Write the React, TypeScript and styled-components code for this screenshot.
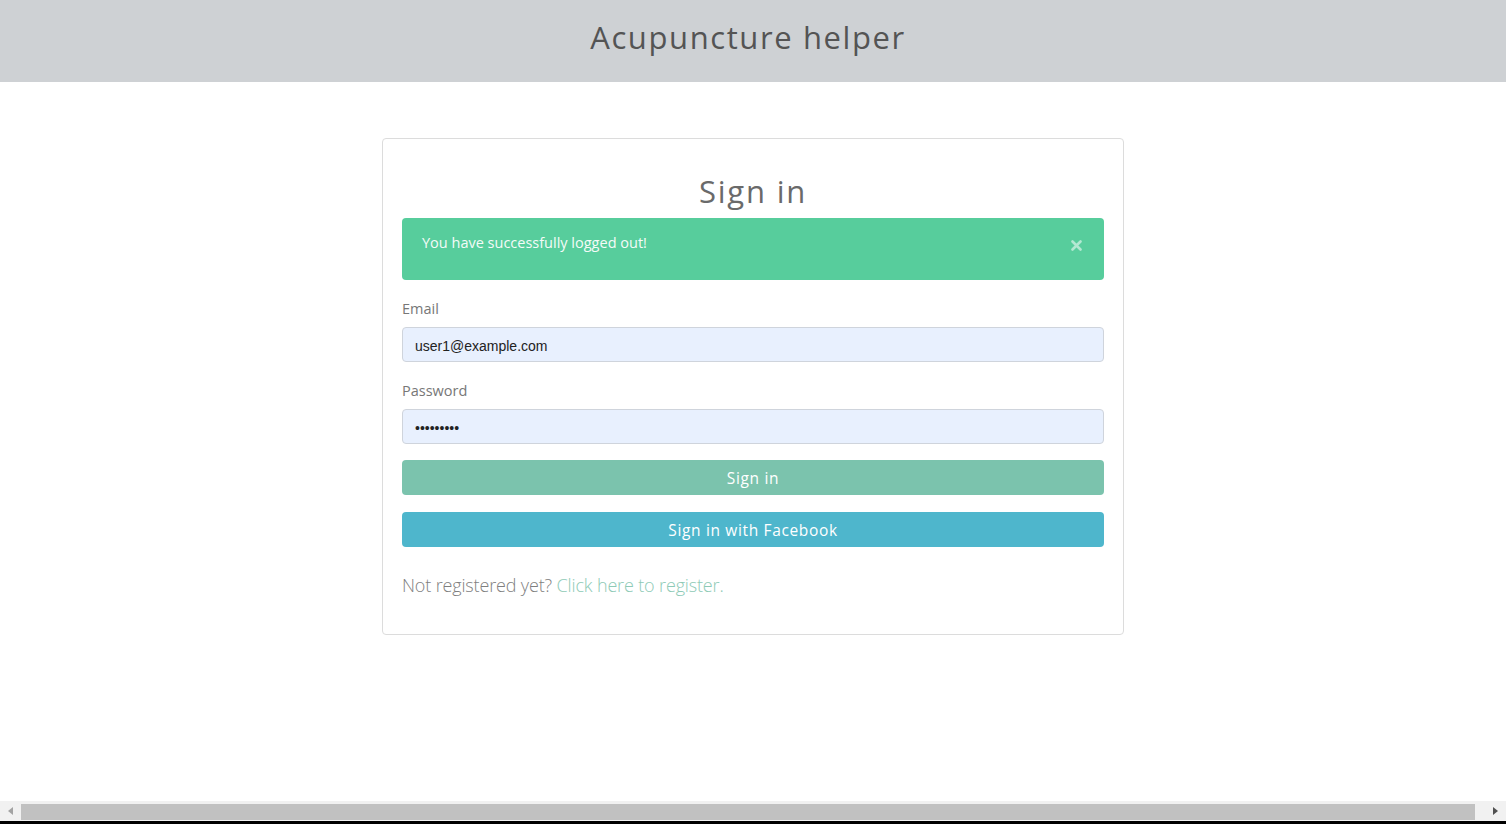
import React from "react";
import styled, { createGlobalStyle } from "styled-components";

const HEADER_HEIGHT = 82;
const DISPLAY_FONT = `"Open Sans", "DejaVu Sans", sans-serif`;
const BODY_FONT = `"Open Sans", "Noto Sans", sans-serif`;

const GlobalStyles = createGlobalStyle`
  html, body {
    margin: 0;
    padding: 0;
    height: 100%;
    background: #ffffff;
    font-family: ${BODY_FONT};
  }
  #root {
    height: 100%;
  }
  * {
    box-sizing: border-box;
  }
`;

const Page = styled.div`
  display: flex;
  flex-direction: column;
  height: 100vh;
  overflow: hidden;
`;

const Header = styled.header`
  height: ${HEADER_HEIGHT}px;
  flex-shrink: 0;
  background: #ced1d4;
  display: flex;
  align-items: center;
  justify-content: center;
  padding-right: 10px;
`;

const HeaderTitle = styled.h1`
  margin: 0 0 9px;
  font-family: ${DISPLAY_FONT};
  font-weight: 500;
  font-size: 31px;
  letter-spacing: 1.6px;
  color: #545454;
`;

const Main = styled.main`
  flex: 1;
  display: flex;
  justify-content: center;
  align-items: flex-start;
  padding-top: 56px;
`;

const Card = styled.section`
  width: 742px;
  border: 1px solid #dcdcdc;
  border-radius: 4px;
  padding: 20px 19px 37px;
  display: flex;
  flex-direction: column;
`;

const CardTitle = styled.h2`
  margin: 12px 0 7px;
  line-height: 40px;
  text-align: center;
  font-family: ${DISPLAY_FONT};
  font-weight: 400;
  font-size: 31px;
  letter-spacing: 1.8px;
  color: #6a6a6a;
`;

const Alert = styled.div`
  height: 62px;
  background: #57cd9c;
  border-radius: 4px;
  padding: 15px 20px;
  display: flex;
  justify-content: space-between;
  align-items: flex-start;
  color: #f4fbf8;
  font-size: 14.5px;
  line-height: 20px;
`;

const CloseButton = styled.span`
  margin: 7px 2px 0 0;
  display: flex;
  color: rgba(255, 255, 255, 0.55);
`;

const Label = styled.label`
  display: block;
  margin: 19px 0 8px;
  font-size: 14.5px;
  line-height: 20px;
  color: #777777;
`;

const Input = styled.input`
  width: 100%;
  height: 35px;
  padding: 2px 12px 0;
  background: #e8f0fe;
  border: 1px solid #cfd4dc;
  border-radius: 4px;
  font-family: "Liberation Sans", Arial, sans-serif;
  font-size: 14px;
  color: #222222;
  outline: none;
`;

const Button = styled.button<{ $color: string; $gap: number }>`
  margin-top: ${(p) => p.$gap}px;
  width: 100%;
  height: 35px;
  border: none;
  border-radius: 4px;
  background: ${(p) => p.$color};
  color: #ffffff;
  font-family: ${DISPLAY_FONT};
  font-size: 15.5px;
  letter-spacing: 0.65px;
  cursor: pointer;
`;

const Footer = styled.p`
  margin: 26px 0 0;
  font-size: 18px;
  line-height: 24px;
  font-weight: 300;
  letter-spacing: -0.15px;
  color: #7f7f7f;
`;

const RegisterLink = styled.a`
  color: #8ecab6;
  text-decoration: none;
`;

const Scrollbar = styled.div`
  height: 20px;
  flex-shrink: 0;
  background: #f1f1f1;
  display: flex;
  align-items: center;
`;

const ScrollArrow = styled.div<{ $side: "left" | "right" }>`
  width: ${(p) => (p.$side === "left" ? 21 : 31)}px;
  display: flex;
  justify-content: ${(p) => (p.$side === "left" ? "center" : "flex-end")};
  padding-right: ${(p) => (p.$side === "left" ? 0 : 7)}px;
`;

const ScrollThumb = styled.div`
  flex: 1;
  height: 16px;
  margin-top: 2px;
  background: #c1c1c1;
`;

const BottomEdge = styled.div`
  height: 3px;
  flex-shrink: 0;
  background: #000000;
`;

function Arrow({ dir, color }: { dir: "left" | "right"; color: string }) {
  const pts = dir === "left" ? "6,1 6,9 1,5" : "1,1 1,9 6,5";
  return (
    <svg width="7" height="10" viewBox="0 0 7 10">
      <polygon points={pts} fill={color} />
    </svg>
  );
}

export default function App() {
  return (
    <Page>
      <GlobalStyles />
      <Header>
        <HeaderTitle>Acupuncture helper</HeaderTitle>
      </Header>
      <Main>
        <Card>
          <CardTitle>Sign in</CardTitle>
          <Alert>
            <span>You have successfully logged out!</span>
            <CloseButton>
              <svg width="11" height="11" viewBox="0 0 11 11">
                <path
                  d="M1.5 1.5 L9.5 9.5 M9.5 1.5 L1.5 9.5"
                  stroke="currentColor"
                  strokeWidth="2.6"
                  strokeLinecap="round"
                />
              </svg>
            </CloseButton>
          </Alert>
          <Label htmlFor="email">Email</Label>
          <Input id="email" type="email" defaultValue="user1@example.com" />
          <Label htmlFor="password">Password</Label>
          <Input id="password" type="password" defaultValue="secret123" />
          <Button $color="#7bc3ad" $gap={16}>
            Sign in
          </Button>
          <Button $color="#4eb6cc" $gap={17}>
            Sign in with Facebook
          </Button>
          <Footer>
            Not registered yet?{" "}
            <RegisterLink href="#">Click here to register.</RegisterLink>
          </Footer>
        </Card>
      </Main>
      <Scrollbar>
        <ScrollArrow $side="left">
          <Arrow dir="left" color="#a3a3a3" />
        </ScrollArrow>
        <ScrollThumb />
        <ScrollArrow $side="right">
          <Arrow dir="right" color="#505050" />
        </ScrollArrow>
      </Scrollbar>
      <BottomEdge />
    </Page>
  );
}
